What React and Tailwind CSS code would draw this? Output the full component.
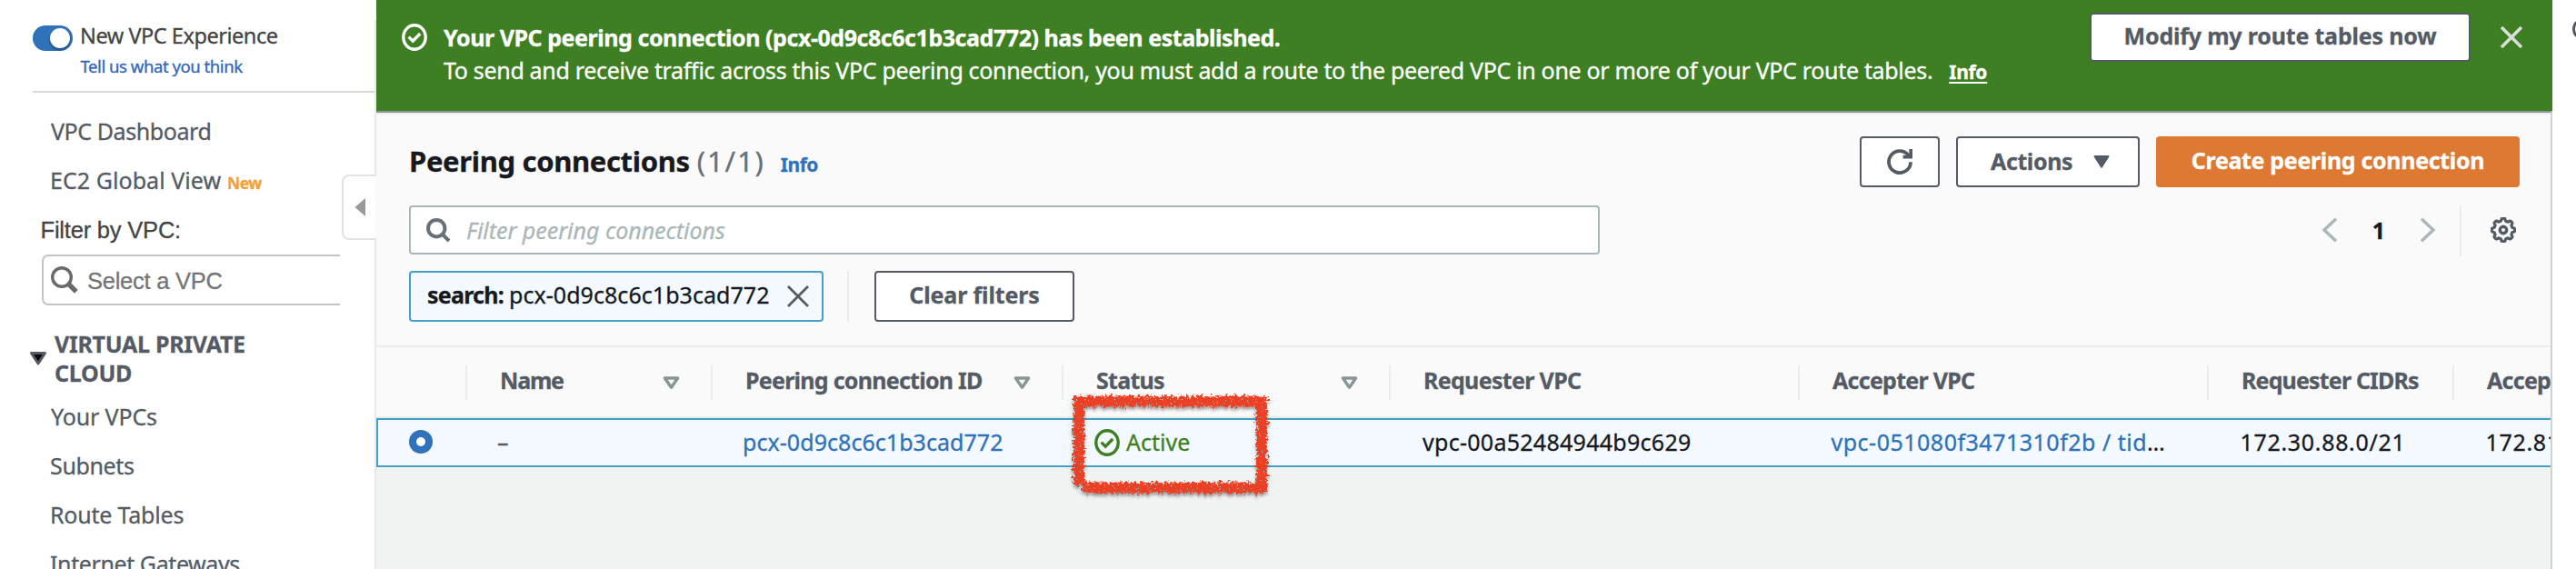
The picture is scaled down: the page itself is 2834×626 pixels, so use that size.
import React from 'react';

const GEAR = (() => {
  const pts = [];
  for (let i = 0; i < 128; i++) {
    const a = (i / 128) * Math.PI * 2;
    const c = Math.cos(8 * a);
    const r = 11.4 + 1.3 * Math.tanh(c * 2.6);
    pts.push(`${(14 + r * Math.sin(a)).toFixed(2)},${(14 - r * Math.cos(a)).toFixed(2)}`);
  }
  return pts.join(' ');
})();

function CheckCircle({ className }) {
  return (
    <svg viewBox="0 0 28 30" className={`h-[30px] w-[28px] shrink-0 ${className}`} fill="none" stroke="currentColor">
      <ellipse cx="14" cy="15" rx="12.2" ry="13.2" strokeWidth="3.4" />
      <path d="M7.6 14.6 L12.2 19.2 L20.2 11" strokeWidth="3.4" />
    </svg>
  );
}

function Cross({ className, w }) {
  return (
    <svg viewBox="0 0 24 24" className={`shrink-0 ${className}`} fill="none" stroke="currentColor" strokeWidth={w}>
      <path d="M1 1 L23 23 M23 1 L1 23" />
    </svg>
  );
}

function SortIcon() {
  return (
    <svg viewBox="0 0 19 15" className="h-[15px] w-[19px] shrink-0 text-[#879596]" fill="none" stroke="currentColor">
      <path d="M2.4 2 H16.6 L9.5 12.2 Z" strokeWidth="3.4" strokeLinejoin="round" />
    </svg>
  );
}

function Chevron({ flip }) {
  return (
    <svg viewBox="0 0 18 28" className={`h-[28px] w-[18px] ${flip ? 'rotate-180' : ''}`} fill="none" stroke="#aab7b8" strokeWidth="3.4">
      <path d="M16 1.8 L3 14 L16 26.2" />
    </svg>
  );
}

function NavItem({ children, className = '' }) {
  return <div className={`h-[54px] whitespace-nowrap text-[25px] leading-[54px] text-[#545b64] ${className}`}>{children}</div>;
}

function Sidebar() {
  return (
    <aside className="relative h-full w-[414px] shrink-0 overflow-hidden bg-white pt-[22px]">
      <div className="h-[604px] w-full border-r-2 border-[#eaeaea]">
        <div className="flex h-[34px] items-center pl-[36px]">
          <div className="mt-[6px] flex h-[28px] w-[44px] items-center justify-end rounded-full bg-[#2f72b9] pr-[3px]">
            <div className="size-[22px] rounded-full bg-white shadow-[0_2px_3px_rgba(0,0,0,0.35)]" />
          </div>
          <span className="ml-[8px] whitespace-nowrap text-[23.5px] leading-[34px] tracking-[-0.46px] text-[#444]">New VPC Experience</span>
        </div>
        <div className="h-[34px] pl-[88.5px] text-[18.5px] leading-[34px] tracking-[-0.44px] text-[#2f66b9]">Tell us what you think</div>
        <div className="ml-[36px] mt-[10px] h-[2px] bg-[#d9d9d9]" />
        <NavItem className="mt-[15px] pl-[56px] tracking-[-0.42px]">VPC Dashboard</NavItem>
        <NavItem className="pl-[55px]">
          <span className="tracking-[0.05px]">EC2 Global View</span>
          <span className="ml-[7px] text-[17.5px] font-bold tracking-[-0.6px] text-[#f2a13a]">New</span>
        </NavItem>
        <div className="h-[55px] pl-[44.5px] font-['Liberation_Sans',sans-serif] text-[25.5px] leading-[57px] tracking-[-0.2px] text-[#444]">Filter by VPC:</div>
        <div className="ml-[46px] flex h-[56px] w-[328px] items-center rounded-l-[7px] border-2 border-r-0 border-[#c4c4c4] pl-[8px]">
          <svg viewBox="0 0 30 30" className="size-[30px]" fill="none" stroke="#6a6a6a">
            <circle cx="12" cy="12" r="10.3" strokeWidth="3.4" />
            <path d="M19.5 19.5 L27.8 27.8" strokeWidth="5.4" />
          </svg>
          <span className="ml-[10px] mt-[2px] font-['Liberation_Sans',sans-serif] text-[25.5px] tracking-[-0.25px] text-[#757575]">Select a VPC</span>
        </div>
        <div className="mt-[26px] flex items-center pl-[33px] text-[25px] font-bold leading-[32px] tracking-[-0.29px] text-[#545b64]">
          <svg viewBox="0 0 18 15" className="h-[15px] w-[18px]">
            <path d="M1.5 1.5 H16.5 L9 13 Z" fill="#000" stroke="#545b64" strokeWidth="3" strokeLinejoin="round" />
            <path d="M5 4 H13 L9 9.6 Z" fill="#0a0a0a" />
          </svg>
          <span className="ml-[9px]">VIRTUAL PRIVATE<br />CLOUD</span>
        </div>
        <NavItem className="mt-[5px] pl-[56px] tracking-[-0.15px]">Your VPCs</NavItem>
        <NavItem className="pl-[55px] tracking-[-0.35px]">Subnets</NavItem>
        <NavItem className="pl-[55px] tracking-[-0.2px]">Route Tables</NavItem>
        <NavItem className="pl-[55px] tracking-[-0.4px]">Internet Gateways</NavItem>
      </div>
      <div className="absolute right-0 top-[192px] flex h-[72px] w-[38px] items-center rounded-l-[8px] border-2 border-r-0 border-[#e2e2e2] bg-white pl-[12px]">
        <svg viewBox="0 0 12 20" className="h-[20px] w-[12px]"><path d="M12 0 V20 L0.5 10 Z" fill="#999" /></svg>
      </div>
    </aside>
  );
}

function Banner() {
  return (
    <div className="flex h-[122px] shrink-0 bg-[#3f7f23] pl-[28px] text-[25px] leading-[36px] text-white">
      <CheckCircle className="mt-[26px]" />
      <div className="ml-[18px] mt-[23px] whitespace-nowrap">
        <div className="font-bold tracking-[-0.45px]">Your VPC peering connection (pcx-0d9c8c6c1b3cad772) has been established.</div>
        <div className="tracking-[-0.32px]">
          To send and receive traffic across this VPC peering connection, you must add a route to the peered VPC in one or more of your VPC route tables.
          <span className="ml-[18px] text-[21px] font-bold tracking-[-0.3px] underline decoration-2 underline-offset-[3px]">Info</span>
        </div>
      </div>
      <button className="ml-auto mt-[14px] h-[54px] w-[419px] shrink-0 rounded-[4px] border-2 border-[#545b64] bg-white pb-[3px] font-bold leading-[47px] tracking-[-0.19px] text-[#545b64]">
        Modify my route tables now
      </button>
      <Cross className="ml-[33px] mr-[33px] mt-[29px] size-[24px] text-[#d9dfd8]" w={3.6} />
    </div>
  );
}

function Header() {
  return (
    <div className="mt-[26px] flex h-[56px] shrink-0 items-center pl-[36px] pr-[34px] text-[#545b64]">
      <div className="whitespace-nowrap pt-[2px] text-[31px] leading-[56px]">
        <span className="font-bold tracking-[-0.34px] text-[#16191f]">Peering connections</span>
        <span className="ml-[8px] tracking-[1.9px] text-[#687078]">(1/1)</span>
        <span className="ml-[17px] text-[21px] font-bold tracking-[-0.5px] text-[#2f72b9]">Info</span>
      </div>
      <button className="ml-auto flex h-[56px] w-[88px] items-center justify-center rounded-[4px] border-2 border-[#545b64] bg-white">
        <svg viewBox="0 0 28 28" className="size-[28px]" fill="none" stroke="currentColor" strokeWidth="3.8">
          <path d="M26 14.2 A12 12 0 1 1 23.2 6.4 L25.6 9" />
          <path d="M26.2 0 V8.6 H17.6" />
        </svg>
      </button>
      <button className="ml-[18px] flex h-[56px] w-[202px] items-center rounded-[4px] border-2 border-[#545b64] bg-white pl-[36px] text-[25px] font-bold leading-[50px] tracking-[-0.4px]">
        <span className="-mt-[3px]">Actions</span>
        <svg viewBox="0 0 18 14" className="ml-[23px] h-[14px] w-[18px]"><path d="M1.5 1 H16.5 L9 12.6 Z" fill="currentColor" stroke="currentColor" strokeWidth="2" strokeLinejoin="round" /></svg>
      </button>
      <button className="ml-[18px] h-[56px] w-[400px] rounded-[4px] bg-[#dd7932] pb-[3px] text-[25px] font-bold leading-[53px] tracking-[-0.34px] text-white">Create peering connection</button>
    </div>
  );
}

function SearchRow() {
  return (
    <div className="mt-[20px] flex h-[54px] shrink-0 items-center pl-[36px] pr-[38px]">
      <div className="flex h-[54px] w-[1310px] items-center rounded-[4px] border-2 border-[#aab7b8] bg-white pl-[17px]">
        <svg viewBox="0 0 27 27" className="size-[27px] text-[#687078]" fill="none" stroke="currentColor" strokeWidth="4">
          <circle cx="11.2" cy="11.2" r="9.2" />
          <path d="M17.8 17.8 L25 25" />
        </svg>
        <span className="-mt-px ml-[17px] text-[25px] italic leading-[50px] tracking-[-0.03px] text-[#aab7b8]">Filter peering connections</span>
      </div>
      <div className="ml-auto flex items-center text-[#16191f]">
        <Chevron />
        <span className="-mt-px ml-[36px] w-[18px] text-center text-[25px] font-bold leading-[50px]">1</span>
        <span className="ml-[36px] flex"><Chevron flip /></span>
        <div className="ml-[26px] mt-[2px] h-[56px] w-[2px] bg-[#eaeded]" />
        <svg viewBox="0 0 28 28" className="ml-[32px] size-[28px]" fill="none" stroke="#545b64" strokeWidth="3.2">
          <polygon points={GEAR} strokeLinejoin="round" />
          <circle cx="14" cy="14" r="3.7" strokeWidth="3.4" />
        </svg>
      </div>
    </div>
  );
}

function TokenRow() {
  return (
    <div className="mt-[18px] flex h-[56px] shrink-0 pl-[36px] text-[25px] leading-[48px]">
      <div className="flex h-[56px] w-[456px] items-center rounded-[4px] border-2 border-[#469fc7] bg-[#f3f9fe] pl-[18px] text-[#16191f]">
        <span className="-mt-[4px] font-bold tracking-[-0.76px]">search:</span>
        <span className="-mt-[4px] ml-[6px] tracking-[0.05px]">pcx-0d9c8c6c1b3cad772</span>
        <Cross className="ml-[19px] size-[24px] text-[#545b64]" w={2.8} />
      </div>
      <div className="ml-[26px] h-[56px] w-[2px] bg-[#eaeded]" />
      <button className="ml-[28px] h-[56px] w-[220px] rounded-[4px] border-2 border-[#545b64] bg-white pb-[4px] font-bold leading-[48px] tracking-[-0.13px] text-[#545b64]">Clear filters</button>
    </div>
  );
}

function Th({ children, className, sort, last }) {
  return (
    <div className={`flex h-[38px] shrink-0 items-center justify-between pl-[36px] pr-[34px] ${last ? '' : 'border-r-2 border-[#eaeded]'} ${className}`}>
      <span className="-mt-[6px]">{children}</span>
      {sort && <SortIcon />}
    </div>
  );
}

function RoughFrame() {
  return (
    <svg viewBox="0 0 240 136" className="pointer-events-none absolute left-[754px] top-[48px] h-[136px] w-[240px]">
      <defs>
        <filter id="crayon" x="0" y="0" width="240" height="136" filterUnits="userSpaceOnUse" colorInterpolationFilters="sRGB">
          <feTurbulence type="fractalNoise" baseFrequency="0.3" numOctaves="3" seed="7" result="n" />
          <feDisplacementMap in="SourceGraphic" in2="n" scale="10" xChannelSelector="R" yChannelSelector="G" result="d" />
          <feTurbulence type="fractalNoise" baseFrequency="0.45" numOctaves="2" seed="3" result="s" />
          <feColorMatrix in="s" type="matrix" values="0 0 0 0 0  0 0 0 0 0  0 0 0 0 0  0 0 0 14 -3.6" result="m" />
          <feComposite in="d" in2="m" operator="in" result="r" />
          <feDropShadow in="r" dx="0" dy="3" stdDeviation="1.8" floodColor="#000" floodOpacity="0.35" />
        </filter>
      </defs>
      <g filter="url(#crayon)" fill="none" stroke="#ec4024" strokeWidth="12">
        <path d="M13 13.5 H226" />
        <path d="M19 8 V106" />
        <path d="M220 8 V113" />
        <path d="M22 108.5 H225" />
      </g>
    </svg>
  );
}

function Table() {
  return (
    <div className="relative mt-[26px] flex grow flex-col overflow-hidden whitespace-nowrap bg-[#f1f3f3] text-[25px]">
      <div className="flex h-[80px] shrink-0 border-y-2 border-[#eaeded] bg-[#fafafa] pt-[20px] font-bold leading-[36px] text-[#545b64]">
        <Th className="w-[100px]" />
        <Th className="w-[270px] tracking-[-1.2px]" sort>Name</Th>
        <Th className="w-[386px] tracking-[-0.74px]" sort>Peering connection ID</Th>
        <Th className="w-[360px] tracking-[-0.74px]" sort>Status</Th>
        <Th className="w-[450px] tracking-[-0.67px]">Requester VPC</Th>
        <Th className="w-[450px] tracking-[-0.73px]">Accepter VPC</Th>
        <Th className="w-[270px] tracking-[-0.84px]">Requester CIDRs</Th>
        <Th className="w-[270px] tracking-[-0.73px]" last>Accepter CIDRs</Th>
      </div>
      <div className="flex h-[54px] shrink-0 items-center border-2 border-r-0 border-[#469fc7] bg-[#f3f9fe] leading-[50px] text-[#16191f]">
        <div className="flex w-[98px] shrink-0 pl-[34px]">
          <div className="-mt-[3px] flex size-[26px] items-center justify-center rounded-full bg-[#2f72b9]"><div className="size-[10px] rounded-full bg-white" /></div>
        </div>
        <div className="-mt-[2px] w-[270px] shrink-0 pl-[33px] text-[#545b64]">–</div>
        <div className="-mt-[2px] w-[386px] shrink-0 pl-[33px] tracking-[0.05px] text-[#2f72b9]">pcx-0d9c8c6c1b3cad772</div>
        <div className="flex w-[360px] shrink-0 items-center pl-[34px] text-[#3f7f23]">
          <CheckCircle /><span className="-mt-[2px] ml-[7px]">Active</span>
        </div>
        <div className="-mt-[2px] w-[450px] shrink-0 pl-[35px] tracking-[0.28px]">vpc-00a52484944b9c629</div>
        <div className="-mt-[2px] w-[450px] shrink-0 pl-[34.5px] tracking-[0.5px]"><span className="text-[#2f72b9]">vpc-051080f3471310f2b / tid</span><span className="tracking-[1.5px]">…</span></div>
        <div className="-mt-[2px] w-[270px] shrink-0 pl-[34.5px] tracking-[0.68px]">172.30.88.0/21</div>
        <div className="-mt-[2px] w-[270px] shrink-0 pl-[34.5px] tracking-[0.68px]">172.81.0.0/16</div>
      </div>
      <RoughFrame />
    </div>
  );
}

export default function App() {
  return (
    <div className="flex h-[626px] w-[2834px] overflow-hidden bg-white font-['Noto_Sans',sans-serif] [-webkit-text-stroke:0.3px]">
      <Sidebar />
      <main className="flex h-full w-[2394px] shrink-0 flex-col overflow-hidden bg-[#fafafa]">
        <Banner />
        <div className="flex min-h-0 grow flex-col border-r-2 border-t-2 border-r-[#cdd2d2] border-t-[#8d9396] shadow-[inset_0_2px_1px_#ededed]">
          <Header />
          <SearchRow />
          <TokenRow />
          <Table />
        </div>
      </main>
      <div className="w-[26px] overflow-hidden pt-[20px]">
        <div className="ml-[22px] size-[24px] rounded-full border-[3px] border-[#545b64]" />
      </div>
    </div>
  );
}
